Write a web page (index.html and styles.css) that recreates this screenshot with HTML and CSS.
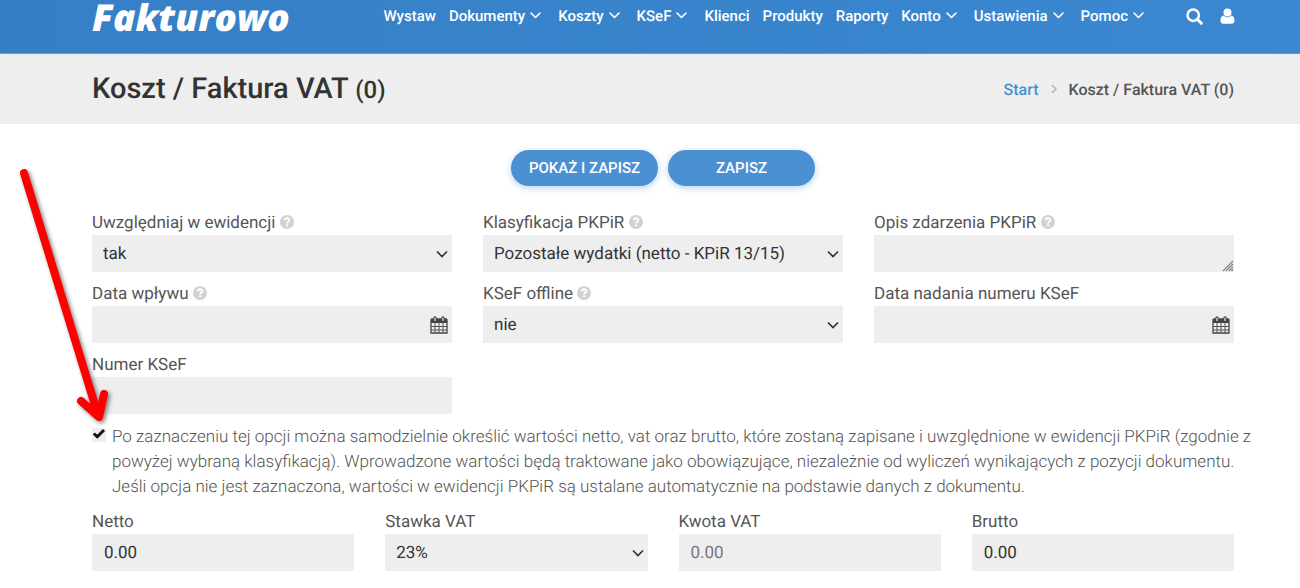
FILE: index.html
```html
<!DOCTYPE html>
<html lang="pl">
<head>
    <meta charset="UTF-8">
    <meta name="viewport" content="width=device-width, initial-scale=1.0">
    <title>Koszt / Faktura VAT (0) - Fakturowo</title>
    <link rel="stylesheet" href="styles.css">
</head>
<body>

    <svg class="sprite" aria-hidden="true">
        <symbol id="chevron" viewBox="0 0 11 7">
            <path d="M1 1 L5.5 5.5 L10 1" fill="none" stroke="currentColor" stroke-width="1.6" stroke-linecap="round" stroke-linejoin="round"/>
        </symbol>
        <symbol id="help" viewBox="0 0 14 14">
            <circle cx="7" cy="7" r="7" fill="#d2d2d2"/>
            <path d="M4.7 5.3 C4.8 2.6 9.4 2.7 9.3 5.2 C9.2 6.8 7.1 6.6 7.1 8.4" fill="none" stroke="#fff" stroke-width="1.9"/>
            <rect x="6.1" y="9.4" width="2" height="2" fill="#fff"/>
        </symbol>
    </svg>

    <header class="header">
        <a href="#" class="logo">Fakturowo</a>
        <nav class="nav">
            <a href="#">Wystaw</a>
            <a href="#">Dokumenty<svg class="chevron"><use href="#chevron"/></svg></a>
            <a href="#">Koszty<svg class="chevron"><use href="#chevron"/></svg></a>
            <a href="#">KSeF<svg class="chevron"><use href="#chevron"/></svg></a>
            <a href="#">Klienci</a>
            <a href="#">Produkty</a>
            <a href="#">Raporty</a>
            <a href="#">Konto<svg class="chevron"><use href="#chevron"/></svg></a>
            <a href="#">Ustawienia<svg class="chevron"><use href="#chevron"/></svg></a>
            <a href="#">Pomoc<svg class="chevron"><use href="#chevron"/></svg></a>
        </nav>
        <div class="tools">
            <a href="#" aria-label="Szukaj">
                <svg width="17" height="17" viewBox="0 0 17 17"><circle cx="7.2" cy="7.2" r="5.7" fill="none" stroke="#fff" stroke-width="2.5"/><path d="M11.5 11.5 L15.3 15.3" stroke="#fff" stroke-width="3" stroke-linecap="round"/></svg>
            </a>
            <a href="#" aria-label="Profil">
                <svg width="15" height="17" viewBox="0 0 15 17"><circle cx="7.5" cy="4.4" r="4" fill="#fff"/><path d="M3.6 7.4 C1.2 7.9 0.5 10 0.5 12.8 C0.5 14.8 1.6 15.8 3.2 15.8 H11.8 C13.4 15.8 14.5 14.8 14.5 12.8 C14.5 10 13.8 7.9 11.4 7.4 C9.4 9.8 5.6 9.8 3.6 7.4 Z" fill="#fff"/></svg>
            </a>
        </div>
    </header>

    <div class="page-title">
        <h1>Koszt / Faktura VAT <small>(0)</small></h1>
        <nav class="breadcrumb">
            <a href="#">Start</a>
            <svg width="6" height="10" viewBox="0 0 6 10"><path d="M1 1 L5 5 L1 9" fill="none" stroke="#b5b5b5" stroke-width="1.5"/></svg>
            <span>Koszt / Faktura VAT (0)</span>
        </nav>
    </div>

    <form class="form">
        <div class="buttons">
            <button type="button">Pokaż i zapisz</button>
            <button type="button">Zapisz</button>
        </div>

        <div class="row three">
            <div class="field">
                <label for="ewidencja">Uwzględniaj w ewidencji <svg class="help"><use href="#help"/></svg></label>
                <select id="ewidencja">
                    <option>tak</option>
                    <option>nie</option>
                </select>
            </div>
            <div class="field">
                <label for="klasyfikacja">Klasyfikacja PKPiR <svg class="help"><use href="#help"/></svg></label>
                <select id="klasyfikacja">
                    <option>Pozostałe wydatki (netto - KPiR 13/15)</option>
                </select>
            </div>
            <div class="field">
                <label for="opis">Opis zdarzenia PKPiR <svg class="help"><use href="#help"/></svg></label>
                <textarea id="opis"></textarea>
            </div>
            <div class="field">
                <label for="dataWplywu">Data wpływu <svg class="help"><use href="#help"/></svg></label>
                <input type="text" id="dataWplywu" class="date">
            </div>
            <div class="field">
                <label for="offline">KSeF offline <svg class="help"><use href="#help"/></svg></label>
                <select id="offline">
                    <option>nie</option>
                    <option>tak</option>
                </select>
            </div>
            <div class="field">
                <label for="dataKsef">Data nadania numeru KSeF</label>
                <input type="text" id="dataKsef" class="date">
            </div>
            <div class="field">
                <label for="numerKsef">Numer KSeF</label>
                <input type="text" id="numerKsef">
            </div>
        </div>

        <div class="check">
            <input type="checkbox" id="wlasne" checked>
            <label for="wlasne">Po zaznaczeniu tej opcji można samodzielnie określić wartości netto, vat oraz brutto, które zostaną zapisane i uwzględnione w ewidencji PKPiR (zgodnie z<br>powyżej wybraną klasyfikacją). Wprowadzone wartości będą traktowane jako obowiązujące, niezależnie od wyliczeń wynikających z pozycji dokumentu.<br>Jeśli opcja nie jest zaznaczona, wartości w ewidencji PKPiR są ustalane automatycznie na podstawie danych z dokumentu.</label>
        </div>

        <div class="row four">
            <div class="field">
                <label for="netto">Netto</label>
                <input type="text" id="netto" value="0.00">
            </div>
            <div class="field">
                <label for="stawka">Stawka VAT</label>
                <select id="stawka">
                    <option>23%</option>
                    <option>8%</option>
                    <option>5%</option>
                </select>
            </div>
            <div class="field">
                <label for="kwota">Kwota VAT</label>
                <input type="text" id="kwota" placeholder="0.00">
            </div>
            <div class="field">
                <label for="brutto">Brutto</label>
                <input type="text" id="brutto" value="0.00">
            </div>
        </div>
    </form>

    <svg class="arrow" width="100" height="262" viewBox="0 0 100 262" aria-hidden="true">
        <path d="M9 9 L83 251 M66 237 L84 253 L89 230" fill="none" stroke="#fe0000" stroke-width="8" stroke-linecap="round" stroke-linejoin="round"/>
    </svg>

</body>
</html>
```
FILE: styles.css
```css
* {
    box-sizing: border-box;
}
body {
    margin: 0;
    font-family: Roboto, Arial, sans-serif;
    font-size: 16px;
    color: #555;
    background: #fff;
    text-rendering: geometricPrecision;
}
a {
    text-decoration: none;
}
.sprite {
    display: none;
}

/* header */
.header {
    display: flex;
    align-items: flex-start;
    height: 54px;
    padding: 0 65px 0 92px;
    background: linear-gradient(to right, #357fc5, #3b88d1);
    border-bottom: 1px solid #5f9bd5;
}
.logo {
    margin-right: auto;
    font-family: "Open Sans", sans-serif;
    font-size: 37px;
    font-weight: 800;
    font-style: italic;
    line-height: 33px;
    color: #fff;
}
.nav {
    display: flex;
    gap: 13px;
    font-size: 15px;
    font-weight: 500;
    line-height: 33px;
}
.nav a {
    color: #fff;
    white-space: nowrap;
}
.chevron {
    width: 11px;
    height: 7px;
    margin: 0 4px 2px 5px;
}
.tools {
    display: flex;
    gap: 17px;
    margin-left: 38px;
    padding-top: 8px;
}
.tools svg {
    display: block;
}

/* title bar */
.page-title {
    display: flex;
    justify-content: space-between;
    align-items: center;
    height: 70px;
    padding: 0 66px 0 92px;
    background: #eee;
}
.page-title h1 {
    margin: 0;
    font-size: 29px;
    font-weight: 500;
    color: #333;
}
.page-title small {
    font-size: 24px;
}
.breadcrumb {
    display: flex;
    align-items: center;
    gap: 12px;
    font-weight: 500;
}
.breadcrumb a {
    color: #4a90d2;
}

/* form */
.form {
    padding: 26px 66px 18px 92px;
}
.buttons {
    display: flex;
    justify-content: center;
    gap: 10px;
    margin-bottom: 25px;
}
button {
    width: 147px;
    height: 36px;
    padding: 0;
    border: none;
    border-radius: 18px;
    background: #4a90d2;
    box-shadow: 0 2px 7px rgba(74, 144, 210, 0.4);
    color: #fff;
    font-family: inherit;
    font-size: 15px;
    font-weight: 500;
    text-transform: uppercase;
    cursor: pointer;
}
.row {
    display: grid;
    gap: 10px 31px;
}
.three {
    grid-template-columns: repeat(3, 1fr);
}
.four {
    grid-template-columns: repeat(4, 1fr);
}
.field label {
    display: block;
    font-size: 17px;
    line-height: 24px;
}
.help {
    width: 14px;
    height: 14px;
    vertical-align: -1px;
}
.field input,
.field select,
.field textarea {
    display: block;
    width: 100%;
    height: 37px;
    padding: 0 12px;
    border: none;
    border-radius: 0;
    background: #eee;
    color: #333;
    font-family: inherit;
    font-size: 17px;
    text-rendering: inherit;
}
.field textarea::-webkit-resizer {
    background: url("data:image/svg+xml,%3Csvg xmlns='http://www.w3.org/2000/svg' width='12' height='12'%3E%3Cpath d='M1 11 L11 1 M4 11 L11 4 M7 11 L11 7 M9.5 11 L11 9.5' stroke='%23888' stroke-width='1.3'/%3E%3C/svg%3E") no-repeat right bottom;
}
.field select {
    appearance: none;
    padding: 0 30px 0 11px;
    background: #eee url("data:image/svg+xml,%3Csvg xmlns='http://www.w3.org/2000/svg' width='12' height='8'%3E%3Cpath d='M1 1.5 L6 6.5 L11 1.5' fill='none' stroke='%23333' stroke-width='1.7'/%3E%3C/svg%3E") no-repeat right 4px center;
}
.field .date {
    background: #eee url("data:image/svg+xml,%3Csvg xmlns='http://www.w3.org/2000/svg' width='18' height='18'%3E%3Cpath d='M1 4 Q1 3 2 3 H16 Q17 3 17 4 V17 H1 Z' fill='%23eee' stroke='%23444' stroke-width='1.3'/%3E%3Cpath d='M1 3 H17 V7 H1 Z' fill='%23444'/%3E%3Cpath d='M5 7 V17 M9 7 V17 M13 7 V17 M1 10.5 H17 M1 14 H17' stroke='%23555' stroke-width='1'/%3E%3Cpath d='M5 2 V4.5 M13 2 V4.5' stroke='%23444' stroke-width='3.4' stroke-linecap='round'/%3E%3Cpath d='M5 2 V4.5 M13 2 V4.5' stroke='%23eee' stroke-width='1.2' stroke-linecap='round'/%3E%3C/svg%3E") no-repeat right 4px center;
}
.field input::placeholder {
    color: #777;
}
.check {
    display: flex;
    align-items: flex-start;
    gap: 6px;
    margin: 11px 0 10px;
}
.check input {
    flex: none;
    appearance: none;
    width: 14px;
    height: 14px;
    margin: 3px 0 0;
    background: #eee;
}
.check input:checked {
    background: #eee url("data:image/svg+xml,%3Csvg xmlns='http://www.w3.org/2000/svg' width='14' height='14'%3E%3Cpath d='M1.8 5.5 L5.3 8.7 L12 2' fill='none' stroke='%23111' stroke-width='3'/%3E%3C/svg%3E") no-repeat;
}
.check label {
    font-size: 17px;
    font-weight: 300;
    line-height: 25px;
    white-space: nowrap;
}

.arrow {
    position: absolute;
    top: 164px;
    left: 15px;
    filter: drop-shadow(2px 2px 2px rgba(0, 0, 0, 0.5));
    pointer-events: none;
}
```
